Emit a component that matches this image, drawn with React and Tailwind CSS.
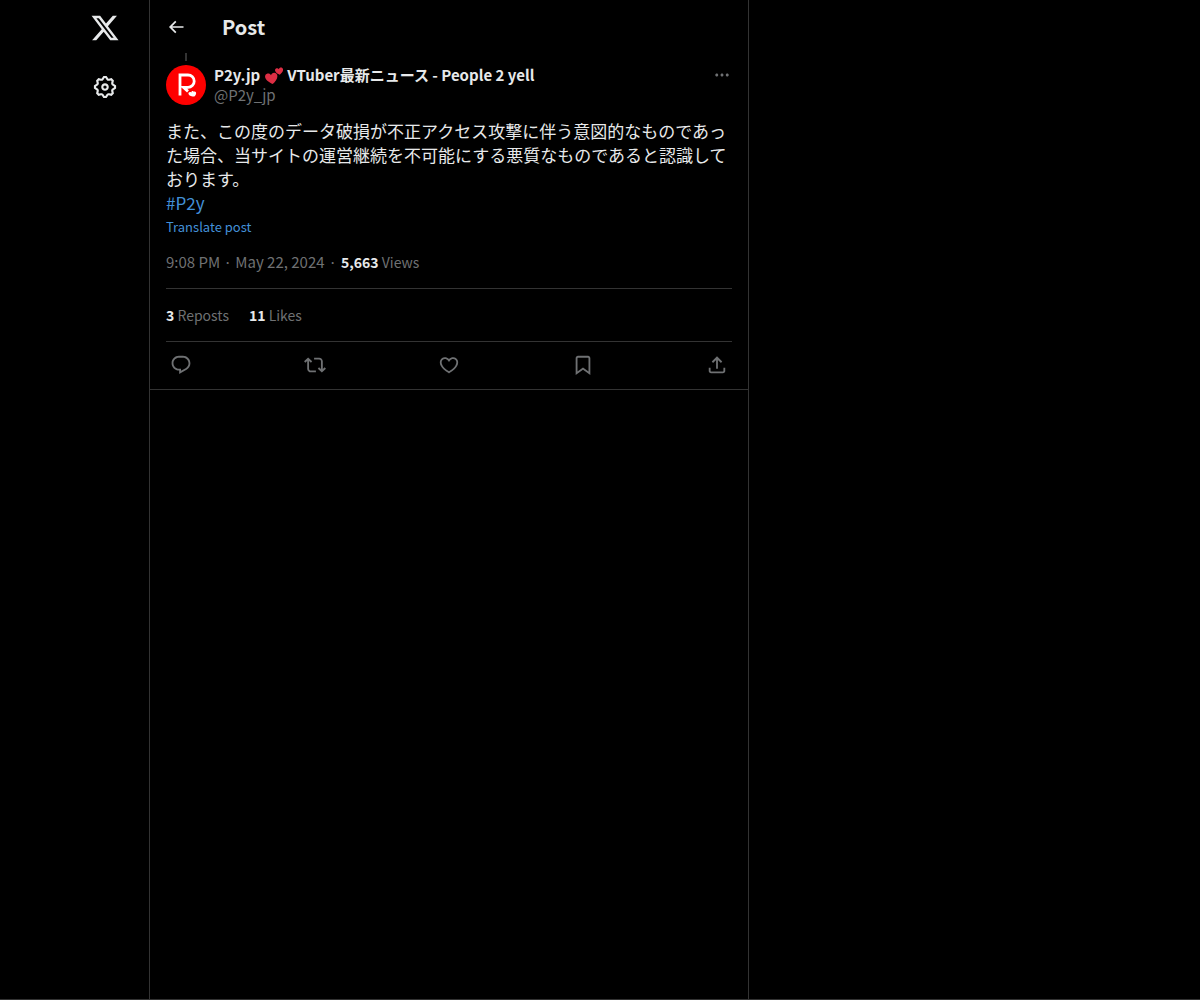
import { useState } from "react";

const BODY = [
  "また、この度のデータ破損が不正アクセス攻撃に伴う意図的なものであった場合、当サイトの運営継続を不可能にする悪質なものであると認識しております。",
];

const ACTIONS = [
  {
    label: "Reply",
    path: "M1.751 10c0-4.42 3.584-8 8.005-8h4.366c4.49 0 8.129 3.64 8.129 8.13 0 2.96-1.607 5.68-4.196 7.11l-8.054 4.46v-3.69h-.067c-4.49.1-8.183-3.51-8.183-8.01zm8.005-6c-3.317 0-6.005 2.69-6.005 6 0 3.37 2.77 6.08 6.138 6.01l.351-.01h1.761v2.3l5.087-2.81c1.951-1.08 3.163-3.13 3.163-5.36 0-3.39-2.744-6.13-6.129-6.13H9.756z",
  },
  {
    label: "Repost",
    path: "M4.5 3.88l4.432 4.14-1.364 1.46L5.5 7.55V16c0 1.1.896 2 2 2H13v2H7.5c-2.209 0-4-1.79-4-4V7.55L1.432 9.48.068 8.02 4.5 3.88zM16.5 6H11V4h5.5c2.209 0 4 1.79 4 4v8.45l2.068-1.93 1.364 1.46-4.432 4.14-4.432-4.14 1.364-1.46 2.068 1.93V8c0-1.1-.896-2-2-2z",
  },
  {
    label: "Like",
    path: "M16.697 5.5c-1.222-.06-2.679.51-3.89 2.16l-.805 1.09-.806-1.09C9.984 6.01 8.526 5.44 7.304 5.5c-1.243.07-2.349.78-2.91 1.91-.552 1.12-.633 2.78.479 4.82 1.074 1.97 3.257 4.27 7.129 6.61 3.87-2.34 6.052-4.64 7.126-6.61 1.111-2.04 1.03-3.7.477-4.82-.561-1.13-1.666-1.84-2.908-1.91zm4.187 7.69c-1.351 2.48-4.001 5.12-8.379 7.67l-.503.3-.504-.3c-4.379-2.55-7.029-5.19-8.382-7.67-1.36-2.5-1.41-4.86-.514-6.67.887-1.79 2.647-2.91 4.601-3.01 1.651-.09 3.368.56 4.798 2.01 1.429-1.45 3.146-2.1 4.796-2.01 1.954.1 3.714 1.22 4.601 3.01.896 1.81.846 4.17-.514 6.67z",
  },
  {
    label: "Bookmark",
    path: "M4 4.5C4 3.12 5.119 2 6.5 2h11C18.881 2 20 3.12 20 4.5v18.44l-8-5.71-8 5.71V4.5zM6.5 4c-.276 0-.5.22-.5.5v14.56l6-4.29 6 4.29V4.5c0-.28-.224-.5-.5-.5h-11z",
  },
  {
    label: "Share",
    path: "M12 2.59l5.7 5.7-1.41 1.42L13 6.41V16h-2V6.41l-3.3 3.3-1.41-1.42L12 2.59zM21 15l-.02 3.51c0 1.38-1.12 2.49-2.5 2.49H5.5C4.11 21 3 19.88 3 18.5V15h2v3.5c0 .28.22.5.5.5h12.98c.28 0 .5-.22.5-.5L19 15h2z",
  },
];

function Icon({ path, className }) {
  return (
    <svg viewBox="0 0 24 24" fill="currentColor" aria-hidden="true" className={className}>
      <path d={path} />
    </svg>
  );
}

function Sidebar() {
  return (
    <nav className="flex w-[88px] shrink-0 flex-col items-center gap-[31px] pt-[13px]">
      <a href="#home" aria-label="X">
        <Icon
          className="size-[30px]"
          path="M18.244 2.25h3.308l-7.227 8.26 8.502 11.24H16.17l-5.214-6.817L4.99 21.75H1.68l7.73-8.835L1.254 2.25H8.08l4.713 6.231zm-1.161 17.52h1.833L7.084 4.126H5.117z"
        />
      </a>
      <a href="#settings" aria-label="Settings">
        <Icon
          className="size-[26px]"
          path="M10.54 1.75h2.92l1.57 2.36c.11.17.32.25.53.21l2.53-.59 2.17 2.17-.58 2.54c-.05.2.04.41.21.53l2.36 1.57v2.92l-2.36 1.57c-.17.12-.26.33-.21.53l.58 2.54-2.17 2.17-2.53-.59c-.21-.04-.42.04-.53.21l-1.57 2.36h-2.92l-1.58-2.36c-.11-.17-.32-.25-.52-.21l-2.54.59-2.17-2.17.58-2.54c.05-.2-.03-.41-.21-.53l-2.35-1.57v-2.92L4.1 8.97c.18-.12.26-.33.21-.53L3.73 5.9 5.9 3.73l2.54.59c.2.04.41-.04.52-.21l1.58-2.36zm1.07 2l-.98 1.47C10.05 6.08 9 6.5 7.99 6.27l-1.46-.34-.6.6.33 1.46c.24 1.01-.18 2.07-1.05 2.64l-1.46.98v.78l1.46.98c.87.57 1.29 1.63 1.05 2.64l-.33 1.46.6.6 1.46-.34c1.01-.23 2.06.19 2.64 1.05l.98 1.47h.78l.97-1.47c.58-.86 1.63-1.28 2.65-1.05l1.45.34.61-.6-.34-1.46c-.23-1.01.18-2.07 1.05-2.64l1.47-.98v-.78l-1.47-.98c-.87-.57-1.28-1.63-1.05-2.64l.34-1.46-.61-.6-1.45.34c-1.02.23-2.07-.19-2.65-1.05l-.97-1.47h-.78zM12 10.5c-.83 0-1.5.67-1.5 1.5s.67 1.5 1.5 1.5c.82 0 1.5-.67 1.5-1.5s-.68-1.5-1.5-1.5zM8.5 12c0-1.93 1.56-3.5 3.5-3.5 1.93 0 3.5 1.57 3.5 3.5s-1.57 3.5-3.5 3.5c-1.94 0-3.5-1.57-3.5-3.5z"
        />
      </a>
    </nav>
  );
}

function Avatar() {
  return (
    <svg viewBox="0 0 40 40" role="img" aria-label="P2y.jp" className="size-10">
      <circle cx="20" cy="20" r="20" fill="#fe0000" />
      <path
        d="M14 30.500V10h8a5.700 5.700 0 0 1 0 12.400h-4.500l4.500 4"
        fill="none"
        stroke="#fff"
        strokeWidth="2.8"
      />
      {/* Heart at the foot of the letter */}
      <path
        d="M28.300 31.500c-2.200 0-5.300-.8-5.800-2.600-.4-1.500 1.300-2.600 2.800-1.500.3-1.500 1.900-1.900 2.500-.7 1-.7 2.600.1 2.300 1.700-.2 1.200-.9 2.300-1.800 3.100z"
        fill="#fff"
      />
    </svg>
  );
}

function TwoHearts() {
  return (
    <svg viewBox="0 0 18 18" role="img" aria-label="💕" className="mr-1 ml-[5px] size-[18px]">
      <g fill="#dd2e44">
        <path d="M7.700 18C4.500 16.600.900 14.400.200 11.500-.300 9.600.700 7.900 2.500 7.500c1.500-.3 2.900.4 3.500 1.700.4-1.400 1.600-2.400 3.100-2.400 1.900 0 3.300 1.500 3.300 3.400 0 2.800-2.500 5.900-4.700 7.800z" />
        <path d="M14.800 8.800c-2-.8-4.300-2.100-4.700-4-.3-1.200.4-2.300 1.500-2.500 1-.2 1.800.2 2.300 1 .2-1 1-1.700 2-1.700 1.300 0 2.200 1 2.200 2.200 0 1.800-1.800 3.800-3.300 5z" />
      </g>
    </svg>
  );
}

function Post() {
  const [active, setActive] = useState(null);

  return (
    <article className="border-b border-[#333333] px-4">
      {/* Thread connector */}
      <div className="mb-1 flex w-10 justify-center">
        <div className="h-2 w-0.5 bg-[#333333]"></div>
      </div>

      <div className="flex gap-2">
        <a href="#P2y_jp" className="shrink-0">
          <Avatar />
        </a>
        <div className="min-w-0 flex-1 leading-5">
          <a href="#P2y_jp" className="flex items-center font-bold">
            P2y.jp
            <TwoHearts />
            VTuber最新ニュース - People 2 yell
          </a>
          <a href="#P2y_jp" className="block text-[#6f7173]">
            @P2y_jp
          </a>
        </div>
        <button
          type="button"
          aria-label="More"
          className="flex size-5 items-center justify-center text-[#6f7173]"
        >
          <Icon
            className="size-[18px]"
            path="M3 12c0-1.100.900-2 2-2s2 .900 2 2-.900 2-2 2-2-.900-2-2zm9 2c1.100 0 2-.900 2-2s-.900-2-2-2-2 .900-2 2 .900 2 2 2zm7 0c1.100 0 2-.900 2-2s-.900-2-2-2-2 .900-2 2 .900 2 2 2z"
          />
        </button>
      </div>

      {/* Body */}
      <div className="mt-[14px] text-[17px] leading-6">
        {BODY.map((text) => (
          <p key={text}>{text}</p>
        ))}
        <a href="#P2y" className="block text-[#4390d8]">
          #P2y
        </a>
      </div>
      <button type="button" className="block text-[13px] leading-6 text-[#4390d8]">
        Translate post
      </button>

      {/* Date and views */}
      <div className="flex gap-1 border-b border-[#333333] pt-[13px] pb-4 leading-5 text-[#6f7173]">
        <a href="#status">9:08 PM · May 22, 2024</a>
        <span>·</span>
        <span className="text-sm leading-5">
          <b className="text-[#e7e9ea]">5,663</b> Views
        </span>
      </div>

      <div className="flex gap-5 border-b border-[#333333] py-4 text-sm leading-5 text-[#6f7173]">
        <a href="#reposts">
          <b className="text-[#e7e9ea]">3</b> Reposts
        </a>
        <a href="#likes">
          <b className="text-[#e7e9ea]">11</b> Likes
        </a>
      </div>

      <div className="flex h-[47px] items-center justify-between pb-0.5 text-[#6f7173]">
        {ACTIONS.map((action) => (
          <button
            key={action.label}
            type="button"
            aria-label={action.label}
            aria-pressed={active === action.label}
            onClick={() => setActive(action.label)}
            className="flex w-[30px] justify-center"
          >
            <Icon path={action.path} className="size-[22px]" />
          </button>
        ))}
      </div>
    </article>
  );
}

function App() {
  return (
    <div className="flex min-h-screen justify-center border-b border-[#333333] bg-black font-['Noto_Sans_CJK_JP',sans-serif] text-[15px] text-[#e7e9ea]">
      <Sidebar />

      <main className="w-full max-w-[600px] border-x border-[#333333]">
        <header className="flex h-[53px] items-center gap-9 px-4">
          <button type="button" aria-label="Back" className="flex w-5 justify-center">
            <Icon
              className="size-5"
              path="M7.414 13l5.043 5.040-1.414 1.420L3.586 12l7.457-7.460 1.414 1.420L7.414 11H21v2H7.414z"
            />
          </button>
          <h1 className="text-xl font-bold">Post</h1>
        </header>
        <Post />
      </main>

      {/* Empty right column */}
      <aside className="hidden w-[390px] shrink-0 lg:block"></aside>
    </div>
  );
}

export default App;
